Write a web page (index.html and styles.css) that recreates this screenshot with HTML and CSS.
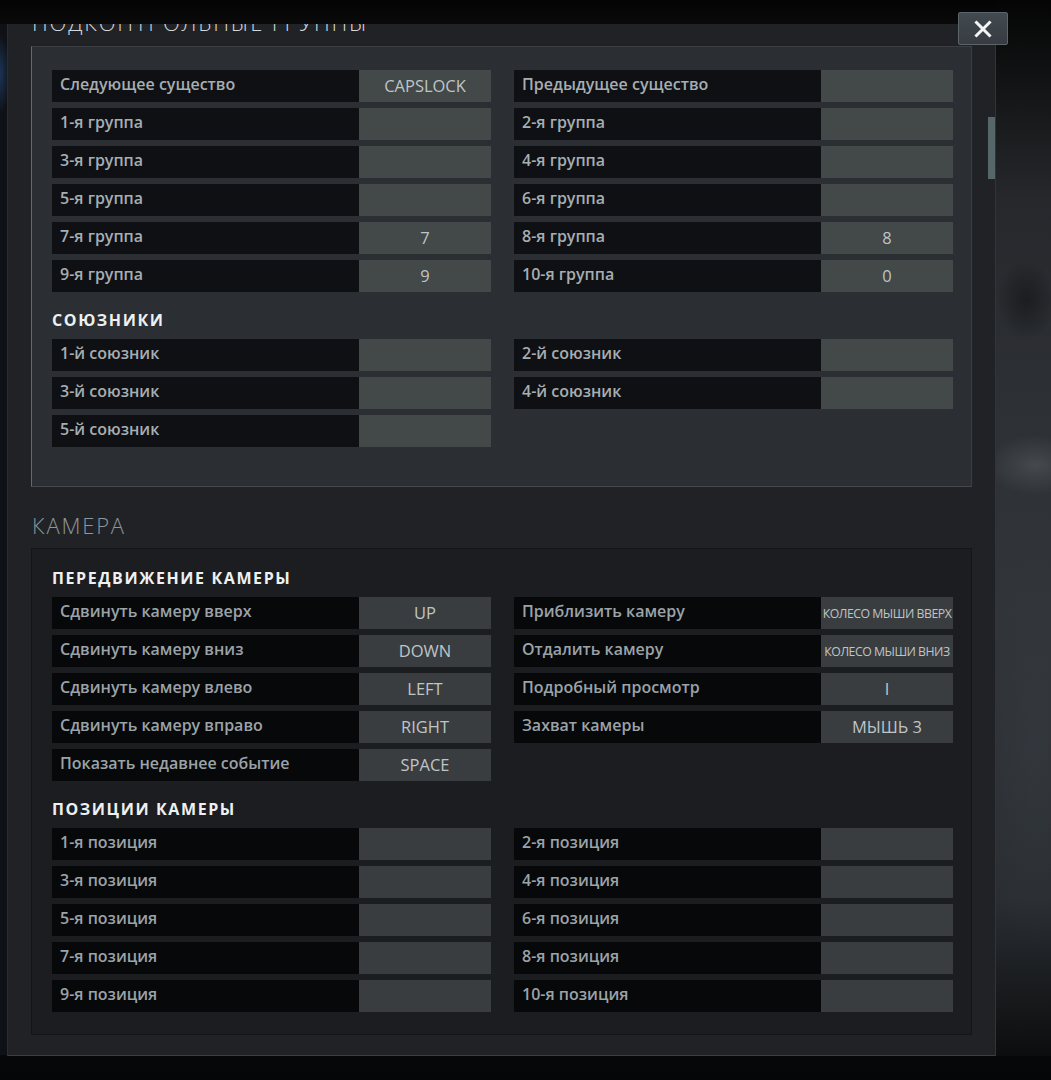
FILE: index.html
```html
<!DOCTYPE html>
<html lang="ru">
<head>
    <meta charset="UTF-8">
    <title>Горячие клавиши</title>
    <link rel="stylesheet" href="styles.css">
</head>
<body>
    <div class="stage">
        <div class="side"></div>

        <div class="panel">
            <button class="close" type="button" aria-label="Закрыть">
                <svg width="18" height="18" viewBox="0 0 18 18"><path d="M2.5 2.5 L15.5 15.5 M15.5 2.5 L2.5 15.5" stroke="#f2f4f5" stroke-width="3" stroke-linecap="square"/></svg>
            </button>
            <div class="scrollbar"><div class="thumb"></div></div>

            <div class="content">
                <h2 class="section-title top">Подконтрольные группы</h2>
                <div class="box box-active">
                    <div class="grid">
                        <div class="bind"><span class="label">Следующее существо</span><span class="key">CAPSLOCK</span></div>
                        <div class="bind"><span class="label">Предыдущее существо</span><span class="key"></span></div>
                        <div class="bind"><span class="label">1-я группа</span><span class="key"></span></div>
                        <div class="bind"><span class="label">2-я группа</span><span class="key"></span></div>
                        <div class="bind"><span class="label">3-я группа</span><span class="key"></span></div>
                        <div class="bind"><span class="label">4-я группа</span><span class="key"></span></div>
                        <div class="bind"><span class="label">5-я группа</span><span class="key"></span></div>
                        <div class="bind"><span class="label">6-я группа</span><span class="key"></span></div>
                        <div class="bind"><span class="label">7-я группа</span><span class="key">7</span></div>
                        <div class="bind"><span class="label">8-я группа</span><span class="key">8</span></div>
                        <div class="bind"><span class="label">9-я группа</span><span class="key">9</span></div>
                        <div class="bind"><span class="label">10-я группа</span><span class="key">0</span></div>
                    </div>

                    <h3 class="sub-title">Союзники</h3>
                    <div class="grid">
                        <div class="bind"><span class="label">1-й союзник</span><span class="key"></span></div>
                        <div class="bind"><span class="label">2-й союзник</span><span class="key"></span></div>
                        <div class="bind"><span class="label">3-й союзник</span><span class="key"></span></div>
                        <div class="bind"><span class="label">4-й союзник</span><span class="key"></span></div>
                        <div class="bind"><span class="label">5-й союзник</span><span class="key"></span></div>
                    </div>
                </div>

                <h2 class="section-title">Камера</h2>
                <div class="box">
                    <h3 class="sub-title first">Передвижение камеры</h3>
                    <div class="grid">
                        <div class="bind"><span class="label">Сдвинуть камеру вверх</span><span class="key">UP</span></div>
                        <div class="bind"><span class="label">Приблизить камеру</span><span class="key small">колесо мыши вверх</span></div>
                        <div class="bind"><span class="label">Сдвинуть камеру вниз</span><span class="key">DOWN</span></div>
                        <div class="bind"><span class="label">Отдалить камеру</span><span class="key small">колесо мыши вниз</span></div>
                        <div class="bind"><span class="label">Сдвинуть камеру влево</span><span class="key">LEFT</span></div>
                        <div class="bind"><span class="label">Подробный просмотр</span><span class="key">I</span></div>
                        <div class="bind"><span class="label">Сдвинуть камеру вправо</span><span class="key">RIGHT</span></div>
                        <div class="bind"><span class="label">Захват камеры</span><span class="key">МЫШЬ 3</span></div>
                        <div class="bind"><span class="label">Показать недавнее событие</span><span class="key">SPACE</span></div>
                    </div>

                    <h3 class="sub-title">Позиции камеры</h3>
                    <div class="grid">
                        <div class="bind"><span class="label">1-я позиция</span><span class="key"></span></div>
                        <div class="bind"><span class="label">2-я позиция</span><span class="key"></span></div>
                        <div class="bind"><span class="label">3-я позиция</span><span class="key"></span></div>
                        <div class="bind"><span class="label">4-я позиция</span><span class="key"></span></div>
                        <div class="bind"><span class="label">5-я позиция</span><span class="key"></span></div>
                        <div class="bind"><span class="label">6-я позиция</span><span class="key"></span></div>
                        <div class="bind"><span class="label">7-я позиция</span><span class="key"></span></div>
                        <div class="bind"><span class="label">8-я позиция</span><span class="key"></span></div>
                        <div class="bind"><span class="label">9-я позиция</span><span class="key"></span></div>
                        <div class="bind"><span class="label">10-я позиция</span><span class="key"></span></div>
                    </div>
                </div>
            </div>
        </div>

        <div class="backdrop"></div>
    </div>
</body>
</html>
```

FILE: styles.css
```css
* {
    box-sizing: border-box;
}

html, body {
    margin: 0;
    height: 100%;
}

body {
    font-family: "Open Sans", "Noto Sans", sans-serif;
    background: #050607;
    overflow: hidden;
}

.stage {
    display: flex;
    height: 1080px;
    padding-top: 24px;
    background: linear-gradient(180deg, #030303 0, #0a0a0b 24px, #07080a 1055px, #050607 100%);
}

.side {
    width: 7px;
    height: 1031px;
    background:
        radial-gradient(ellipse 10px 40px at 0 50px, rgba(40, 80, 140, 0.55), rgba(40, 80, 140, 0) 100%),
        #0e1216;
}

.backdrop {
    flex: 1;
    height: 1056px;
    margin-top: -24px;
    background:
        radial-gradient(ellipse 30px 40px at 30px 300px, rgba(0, 0, 0, 0.35), rgba(0, 0, 0, 0) 100%),
        radial-gradient(ellipse 50px 30px at 40px 465px, rgba(110, 118, 124, 0.35), rgba(0, 0, 0, 0) 100%),
        radial-gradient(ellipse 60px 200px at 40px 750px, rgba(60, 66, 72, 0.35), rgba(0, 0, 0, 0) 100%),
        linear-gradient(180deg, #050505 0, #121314 80px, #26282c 200px, #2d3034 400px, #313539 600px, #2a2e33 900px, #0c0d0e 1056px);
}

.panel {
    position: relative;
    width: 989px;
    height: 1032px;
    background: #212225;
    border-left: 1px solid #2a2c2f;
    border-right: 1px solid #323437;
    border-bottom: 1px solid #3d3e40;
}

.content {
    height: 100%;
    overflow: hidden;
    padding: 0 23px;
}

.close {
    position: absolute;
    top: -12px;
    right: -13px;
    width: 50px;
    height: 33px;
    display: flex;
    align-items: center;
    justify-content: center;
    padding: 0;
    background: linear-gradient(180deg, #434a4f 0%, #363c41 100%);
    border: 1px solid #5d656b;
    border-radius: 2px;
    z-index: 2;
}

.scrollbar {
    position: absolute;
    top: 0;
    right: 0;
    width: 23px;
    height: 100%;
}

.thumb {
    position: absolute;
    top: 93px;
    right: 0;
    width: 7px;
    height: 62px;
    background: #566769;
}

.section-title {
    margin: 23px 0 8px 1px;
    font-size: 22px;
    line-height: 30px;
    font-weight: 300;
    letter-spacing: 1.8px;
    text-transform: uppercase;
    color: #8c969c;
}

.section-title.top {
    margin: -17px 0 9px 1px;
    color: #d2d7da;
}

.box {
    background: #1c1d20;
    border: 1px solid #141517;
    padding: 0 19px 22px 20px;
}

.box-active {
    background: #2b2e32;
    border: 1px solid #3a3e42;
    border-left-color: #4b6d99;
    border-bottom-color: #46494c;
    padding: 23px 19px 39px 20px;
}

.grid {
    display: grid;
    grid-template-columns: 439px 439px;
    column-gap: 23px;
    row-gap: 6px;
}

.bind {
    display: flex;
    height: 32px;
}

.label {
    width: 307px;
    padding: 0 8px;
    line-height: 28px;
    font-size: 16px;
    font-weight: 600;
    color: #9ba3a8;
    background: #07080a;
    white-space: nowrap;
}

.key {
    width: 132px;
    line-height: 32px;
    text-align: center;
    font-size: 16.5px;
    color: #bec5c7;
    background: #3a3d40;
    text-transform: uppercase;
    white-space: nowrap;
    overflow: hidden;
}

.key.small {
    font-size: 12.3px;
    letter-spacing: -0.5px;
    line-height: 34px;
}

.box-active .label {
    background: #0f1013;
    color: #a6aeb2;
}

.box-active .key {
    background: #434849;
}

.sub-title {
    margin: 18px 0 9px 0;
    font-size: 16px;
    line-height: 20px;
    font-weight: 700;
    letter-spacing: 1.6px;
    text-transform: uppercase;
    color: #eef0f1;
}

.sub-title.first {
    margin-top: 19px;
}
```
